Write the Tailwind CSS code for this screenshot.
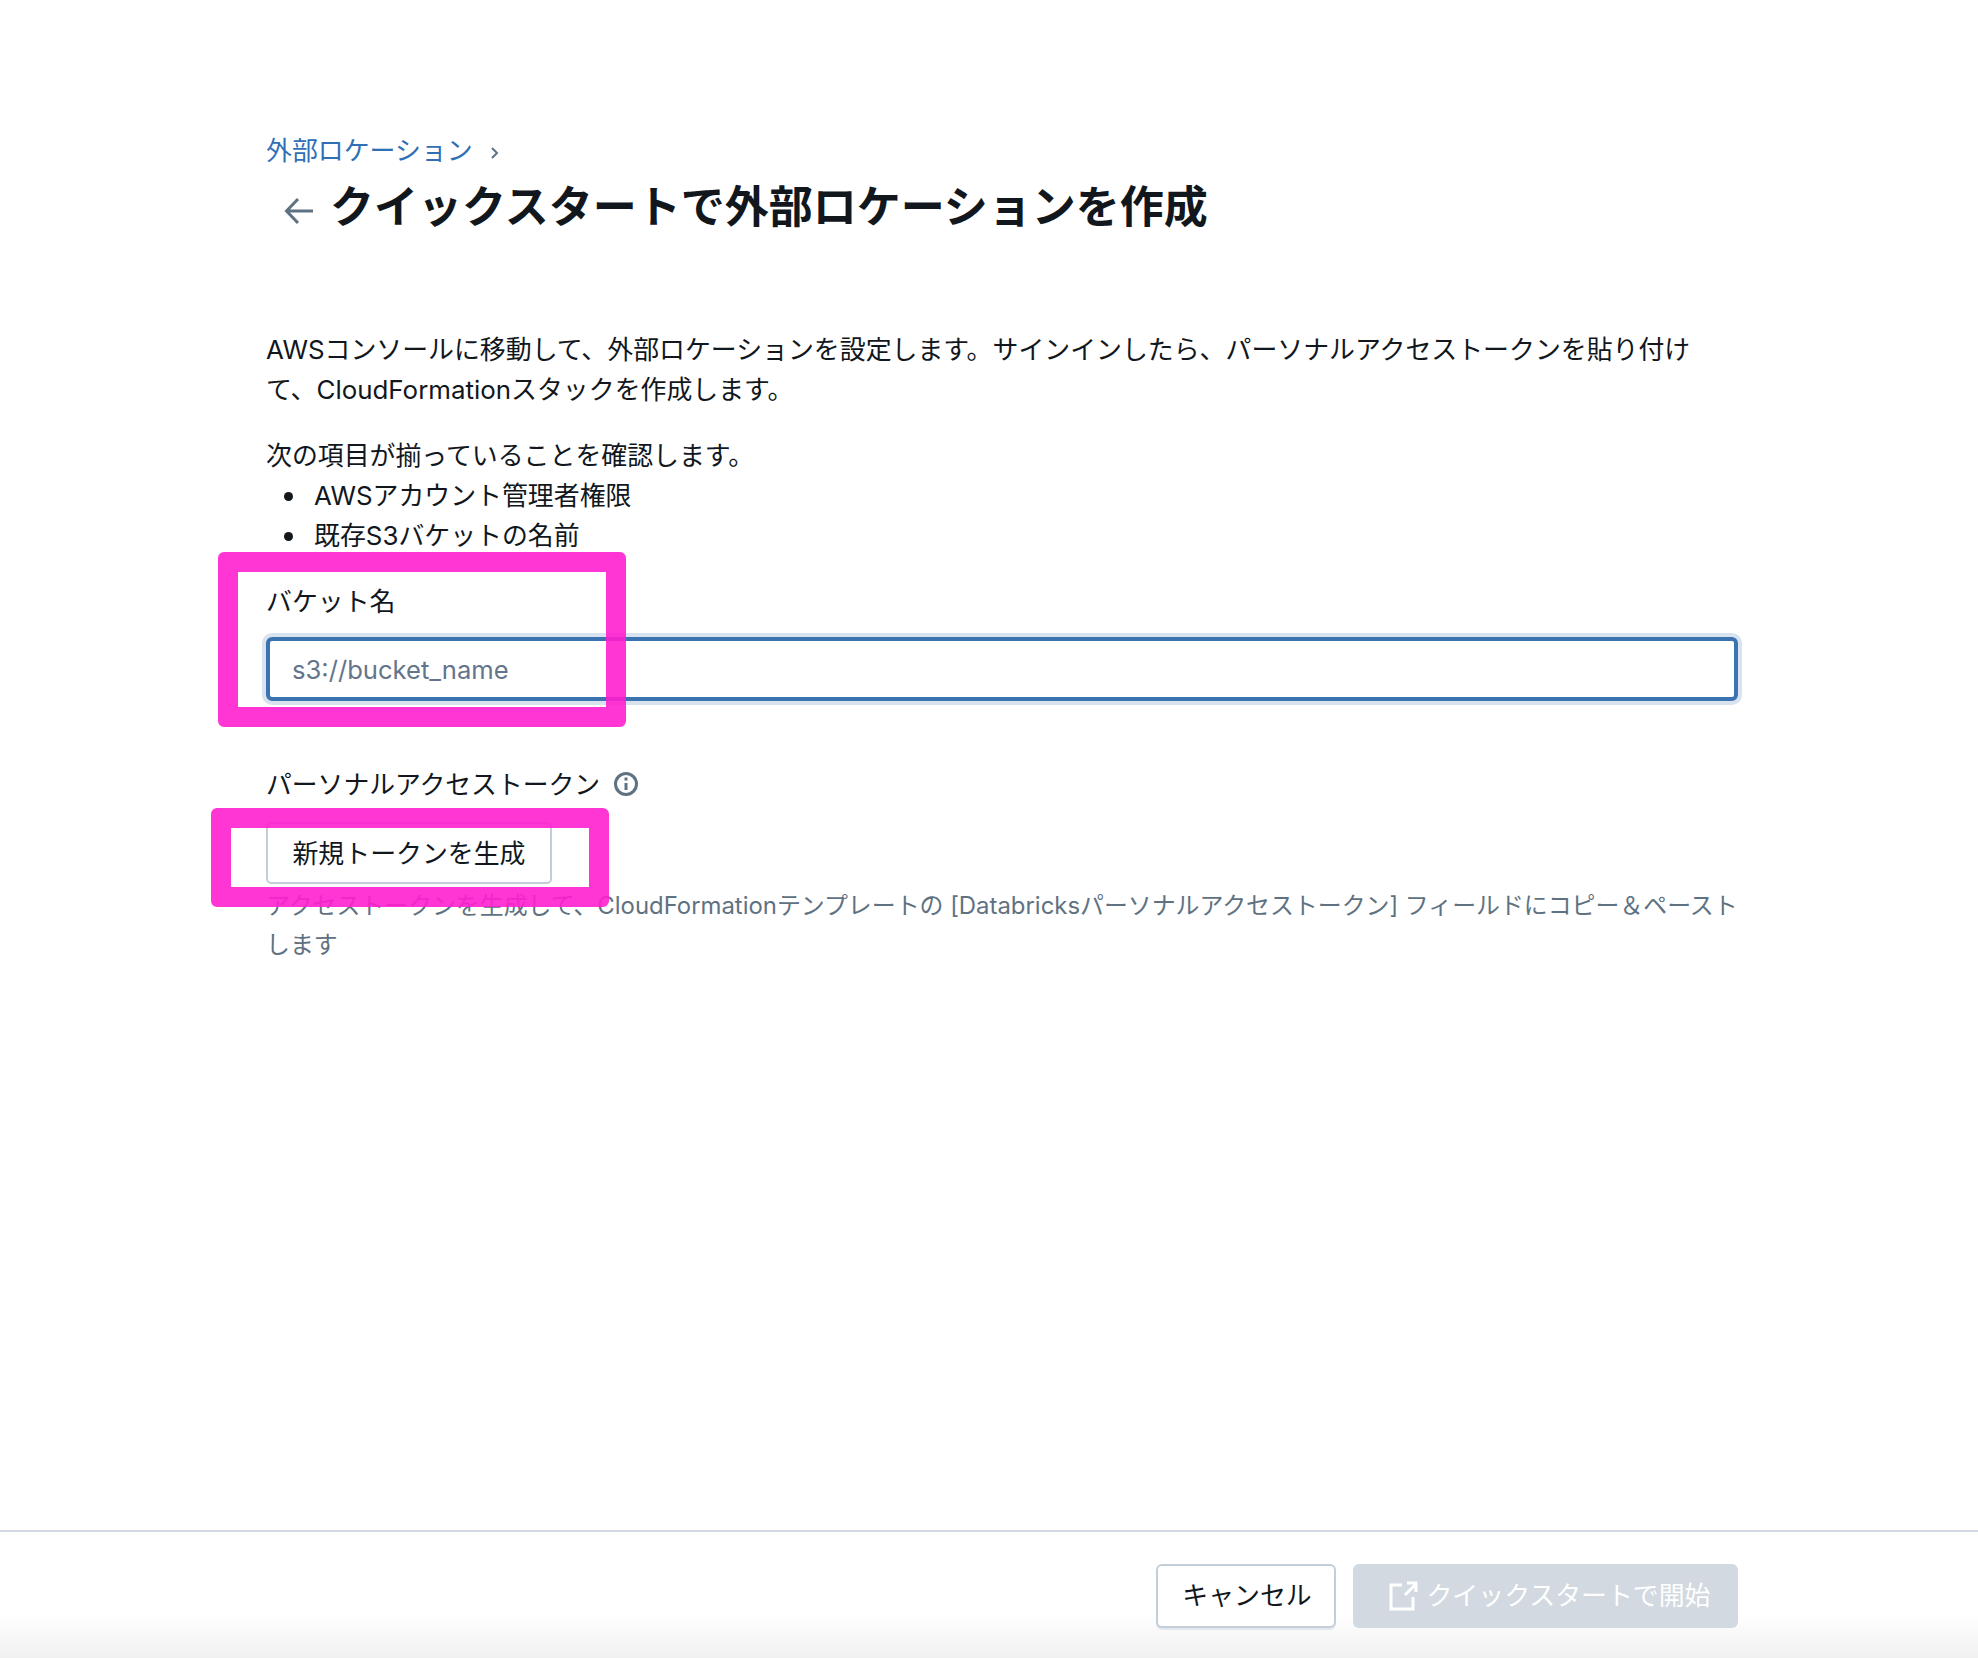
<!DOCTYPE html>
<html lang="ja">
<head>
<meta charset="utf-8">
<script src="https://cdn.jsdelivr.net/npm/@tailwindcss/browser@4"></script>
</head>
<body class="bg-white">
<div class="relative w-[1978px] h-[1658px] overflow-hidden flex flex-col bg-white text-[#11171c] font-['Inter','Noto_Sans_CJK_JP',sans-serif] text-[25.9px] leading-[40px]">
  <main class="flex-1 pl-[266px] pr-[240px] pt-[131px]">
    <nav class="flex items-center h-[40px] text-[#2f6fb5]">
      <a>外部ロケーション</a>
      <svg class="ml-[16px] mt-[3px]" width="12" height="16" viewBox="0 0 12 16" fill="none" stroke="#5f7281" stroke-width="2"><path d="M3 3l5 5-5 5"/></svg>
    </nav>
    <div class="flex items-center h-[50px] mt-[11px]">
      <svg class="ml-[18px] mt-[8px]" width="30" height="28" viewBox="0 0 30 28" fill="none" stroke="#5f7281" stroke-width="3"><path d="M29 14H3M14 2L2.500 14 14 26"/></svg>
      <h1 class="ml-[16px] text-[44px] leading-[50px] font-bold">クイックスタートで外部ロケーションを作成</h1>
    </div>
    <p class="mt-[98px]">AWSコンソールに移動して、外部ロケーションを設定します。サインインしたら、パーソナルアクセストークンを貼り付けて、CloudFormationスタックを作成します。</p>
    <p class="mt-[26px]">次の項目が揃っていることを確認します。</p>
    <ul class="pl-[18px]">
      <li class="flex items-center gap-[21px]"><span class="w-[9px] h-[9px] rounded-full bg-[#11171c]"></span>AWSアカウント管理者権限</li>
      <li class="flex items-center gap-[21px]"><span class="w-[9px] h-[9px] rounded-full bg-[#11171c]"></span>既存S3バケットの名前</li>
    </ul>
    <label class="block mt-[26px]">バケット名</label>
    <div class="mt-[15px] h-[64px] rounded-[6px] border-4 border-[#3b72b0] ring-4 ring-[#d9e3ef] flex items-center pl-[22px] pt-px text-[#64748b] text-[25.6px]">s3://bucket_name</div>
    <div class="mt-[64px] flex items-center h-[40px]">
      <span class="text-[25.8px]">パーソナルアクセストークン</span>
      <svg class="ml-[13px] mb-[2px]" width="26" height="26" viewBox="0 0 26 26" fill="none" stroke="#5f7281" stroke-width="3"><circle cx="13" cy="13" r="10.500"/><path d="M13 12v7M13 6.500v3"/></svg>
    </div>
    <button class="block mt-[17px] h-[62px] w-[286px] rounded-[5px] border-2 border-[#c3ced9] bg-white text-[#11171c] text-center pt-px">新規トークンを生成</button>
    <p class="mt-[2px] text-[#5f7281] text-[23.9px] leading-[39px] whitespace-nowrap">アクセストークンを生成して、CloudFormationテンプレートの [Databricksパーソナルアクセストークン] フィールドにコピー＆ペースト<br>します</p>
  </main>
  <footer class="h-[128px] border-t-2 border-[#d3d9e2] flex justify-end items-start gap-[17px] pt-[32px] pr-[240px] bg-linear-to-b from-white from-65% to-[#f1f1f1]">
    <button class="w-[180px] h-[64px] rounded-[6px] border-2 border-[#c3ced9] bg-white text-[#11171c] shadow-[0_2px_0_#e3e8ee] pl-[2px]">キャンセル</button>
    <button class="w-[385px] h-[64px] rounded-[6px] bg-[#d2d9e1] text-white flex items-center justify-center gap-[8px] pl-[8px]">
      <svg width="30" height="30" viewBox="0 0 30 30" fill="none" stroke="#fff" stroke-width="3"><path d="M14 4H3v24h22V16M17 14L28 3M19 2h9v9"/></svg>
      <span>クイックスタートで開始</span>
    </button>
  </footer>
  <div class="absolute left-[218px] top-[552px] w-[408px] h-[175px] rounded-[6px] border-[20px] border-[#ff1fcf]/90"></div>
  <div class="absolute left-[211px] top-[808px] w-[398px] h-[99px] rounded-[6px] border-[20px] border-[#ff1fcf]/90"></div>
</div>
</body>
</html>
